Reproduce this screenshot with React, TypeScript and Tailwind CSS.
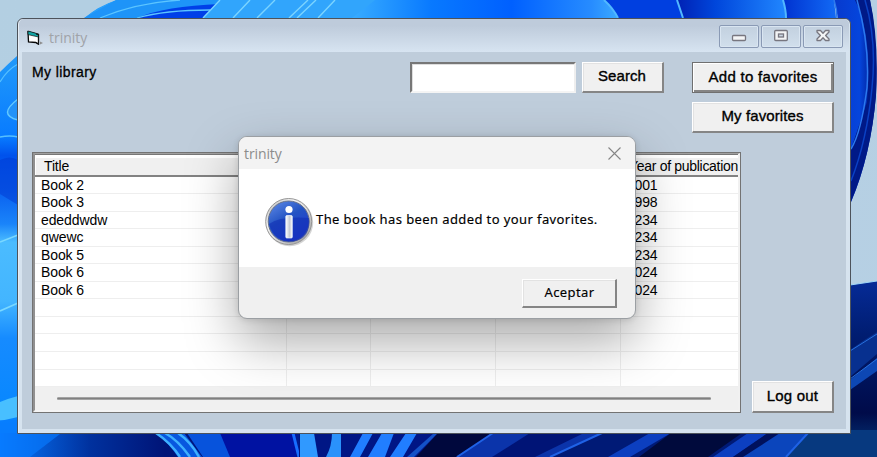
import type { ReactNode } from "react";

const titles = ["Book 2", "Book 3", "ededdwdw", "qwewc", "Book 5", "Book 6", "Book 6", "", "", "", "", ""];
const years = ["2001", "1998", "1234", "1234", "1234", "2024", "2024", "", "", "", "", ""];

function Wallpaper() {
  return (
    <svg className="absolute inset-0" width="877" height="457" viewBox="0 0 877 457">
      <defs>
        <linearGradient id="sky" x1="0" y1="0" x2="1" y2="1">
          <stop offset="0" stopColor="#b3cfe2" />
          <stop offset="1" stopColor="#b7d0e4" />
        </linearGradient>
        <linearGradient id="left" x1="0" y1="0" x2="0" y2="1">
          <stop offset="0" stopColor="#2da2fb" />
          <stop offset="0.14" stopColor="#1f97fa" />
          <stop offset="0.3" stopColor="#087bff" />
          <stop offset="0.34" stopColor="#0052ec" />
          <stop offset="0.42" stopColor="#0a62f0" />
          <stop offset="0.49" stopColor="#1a84fa" />
          <stop offset="0.53" stopColor="#4bbcff" />
          <stop offset="0.66" stopColor="#43b5ff" />
          <stop offset="0.74" stopColor="#168bff" />
          <stop offset="0.9" stopColor="#0787ff" />
          <stop offset="1" stopColor="#0874f8" />
        </linearGradient>
        <linearGradient id="petal">
          <stop offset="0" stopColor="#38acff" />
          <stop offset="0.3" stopColor="#0879ff" />
          <stop offset="0.6" stopColor="#0060ff" />
          <stop offset="0.9" stopColor="#278cff" />
          <stop offset="1" stopColor="#3caaff" />
        </linearGradient>
        <linearGradient id="petal2">
          <stop offset="0" stopColor="#0021b4" />
          <stop offset="0.35" stopColor="#0046db" />
          <stop offset="1" stopColor="#2187ff" />
        </linearGradient>
        <linearGradient id="petal3">
          <stop offset="0" stopColor="#0032d0" />
          <stop offset="1" stopColor="#126af5" />
        </linearGradient>
        <linearGradient id="rim">
          <stop offset="0" stopColor="#0739cd" />
          <stop offset="0.6" stopColor="#0545dc" />
          <stop offset="1" stopColor="#001482" />
        </linearGradient>
        <linearGradient id="low">
          <stop offset="0" stopColor="#087bff" />
          <stop offset="0.3" stopColor="#00319e" />
          <stop offset="0.55" stopColor="#001477" />
          <stop offset="1" stopColor="#001b91" />
        </linearGradient>
        <linearGradient id="navy" x1="0" y1="0" x2="0" y2="1">
          <stop offset="0" stopColor="#062b97" />
          <stop offset="0.3" stopColor="#001d72" />
          <stop offset="0.75" stopColor="#000b49" />
          <stop offset="1" stopColor="#064084" />
        </linearGradient>
      </defs>
      <rect width="877" height="457" fill="url(#sky)" />

      <path d="M116 0Q98 6 84 18V44L17 56Q9 63 0 72V457H60V18H220V0Z" fill="url(#left)" />
      <path d="M17 0H116Q98 6 84 18L17 56Z" fill="#b3cfe2" />
      <path d="M116 0L84 18H225V0Z" fill="#1e94f8" />
      <path d="M137 18Q165 6 220 4V18Z" fill="#003fe8" />
      <path d="M100 18Q135 3 180 0M137 18Q165 10 210 10" fill="none" stroke="#5cc5ff" strokeWidth="1.3" />
      <path d="M18 99Q-3 115 18 120" fill="#2292f8" stroke="#62c8ff" strokeWidth="1.5" />
      <path d="M0 82Q7 70 18 64M0 137Q10 135 18 137" fill="none" stroke="#55bfff" strokeWidth="1.3" />
      <path d="M0 160Q10 155 18 160V205L0 194Z" fill="#0036cf" opacity="0.45" />
      <path d="M0 242L18 235M0 311L18 303" stroke="#7ad8ff" strokeWidth="1.6" />
      <path d="M0 402Q10 398 18 396V417L0 421Z" fill="#48bfff" />

      <path d="M220 0H400V18H203Z" fill="#31a5fc" />
      <path d="M220 0L203 18M250 0L233 18M275 0L257 18M308 0L289 18M316 0L297 18M335 0L318 18" stroke="#7bd4ff" strokeWidth="1.4" />
      <path d="M375 0H604Q612 7 618 18H352Z" fill="url(#petal)" />
      <path d="M604 0H680L683 18H618Q612 7 604 0Z" fill="#003fe0" />
      <path d="M677 0H783L786 18H683Z" fill="url(#petal2)" />
      <path d="M783 0H834L836 18H786Z" fill="url(#petal3)" />
      <path d="M604 0Q613 8 618 18M677 0L683 18M783 0Q786 10 786 18" fill="none" stroke="#51b8ff" strokeWidth="2" />

      <path d="M834 0H870Q878 40 876 95Q871 155 851 202H838V18Z" fill="url(#rim)" />
      <path d="M855 0Q873 36 867 102L851 149V202Q871 155 876 95Q879 40 870 0Z" fill="#001987" />
      <path d="M834 0Q837 9 837 18M857 0Q870 45 867 88Q861 133 851 149" fill="none" stroke="#2b79ef" strokeWidth="1.5" />
      <path d="M865 0Q877 40 872 88Q867 140 851 181" fill="none" stroke="#0a41c4" strokeWidth="1.5" />

      <path d="M850 285L877 281V457H840Z" fill="url(#navy)" />
      <path d="M850 285L877 281" stroke="#9fd6f8" strokeWidth="1" />
      <path d="M850 350Q864 340 877 332V354L850 377Z" fill="#07308f" />
      <path d="M850 380L877 358V371L850 390Z" fill="#0d47b4" />
      <path d="M850 351L877 334M850 379L877 359" stroke="#2870dc" />

      <rect y="433" width="300" height="24" fill="url(#low)" />
      <path d="M0 420H18V434H60L30 457H0Z" fill="#087bff" opacity="0.65" />
      <path d="M155 433Q168 442 178 457H202L184 433Z" fill="#0857df" />
      <path d="M156 433Q171 443 180 457M165 433Q178 440 190 457M178 433Q191 442 199 457" fill="none" stroke="#3eb0ff" strokeWidth="2.5" />
      <path d="M187 433H260V457H203Z" fill="#0753dc" />
      <path d="M220 433H296V457H230Z" fill="#0012a2" />
      <path d="M293 433L299 457" stroke="#176dff" strokeWidth="3" />
      <rect x="299" y="433" width="578" height="24" fill="#001685" />
      <path d="M300 433H314L318 457H300Z" fill="#3099ff" />
      <path d="M332 433H341V457H326Q332 446 332 433Z" fill="#2a92fb" />
      <path d="M363 433H373L360 457H350ZM382 433H394L385 457H368ZM406 433H417L403 457H390Z" fill="#217eff" />
      <path d="M434 433H438L414 457H407Z" fill="#1351c7" />
      <path d="M438 433H494L457 457H416Z" fill="#00083d" />
      <path d="M494 433H620L552 457H456Z" fill="#0b34aa" />
      <path d="M530 433H584L535 457H492Z" fill="#001476" />
      <path d="M602 433H780V457H550Z" fill="#001a76" />
      <path d="M650 433H671L630 457H608ZM748 433H768L733 457H713Z" fill="#0c3fc0" />
      <path d="M671 433H742L708 457H639Z" fill="#000a3c" />
      <path d="M768 433H808L778 457H733Z" fill="#00115c" />
      <path d="M780 433H810L786 457H743Z" fill="#0b45bc" />
      <path d="M808 433L850 430H877V457H786Z" fill="#07397f" />
      <path d="M493 433L457 457M602 433L550 457M808 433L786 457" stroke="#1f62e6" strokeWidth="2" />
    </svg>
  );
}

function PushButton({ children, className = "", active = false }: { children: ReactNode; className?: string; active?: boolean }) {
  return (
    <button
      className={`flex items-center justify-center bg-[#f0f0f0] whitespace-nowrap text-black ${
        active
          ? "border border-[#707070] shadow-[inset_1px_1px_0_#fff,inset_-2px_-2px_0_#858585]"
          : "border-t border-l border-r-2 border-b-2 border-t-white border-l-white border-r-[#858585] border-b-[#858585] shadow-[inset_1px_1px_0_#e2e2e2]"
      } ${className}`}
    >
      {children}
    </button>
  );
}

function CaptionButton({ children }: { children: ReactNode }) {
  return (
    <button className="flex h-[23px] w-[40px] items-center justify-center rounded-[2px] border border-[#8a9ab5] bg-gradient-to-b from-[#c2d0df] to-[#d1dfec] pr-px pb-px shadow-[inset_0_0_0_1px_#d9e5f1]">
      <svg width="16" height="16" viewBox="0 0 16 16" fill="none">{children}</svg>
    </button>
  );
}

function ListView() {
  return (
    <div className="h-[261px] w-[709px] border border-[#737373] bg-[#f0f0f0]">
      <div className="h-full border-t border-l-2 border-r-2 border-b-2 border-t-[#a0a0a0] border-l-[#909090] border-r-[#f1f1f1] border-b-[#f4f4f4]">
        <div className="flex h-[22.5px] overflow-hidden border-t border-b-2 border-t-[#777] border-b-[#828282] bg-[#f0f0f0] pt-[2px] text-[14px] leading-[18px] shadow-[inset_1px_3px_0_#fff]">
          <div className="w-[585px] pl-[9px] tracking-[-0.15px]">Title</div>
          <div className="whitespace-nowrap pl-[9px] tracking-[-0.3px]">Year of publication</div>
        </div>
        <div className="bg-white text-[14px] tracking-[-0.1px]">
          {titles.map((title, i) => (
            <div key={i} className="grid h-[17.55px] grid-cols-[252px_84px_125px_125px_1fr] border-b border-[#eeeeee] leading-[17px]">
              <div className="border-r border-[#eeeeee] pl-[6px]">{title}</div>
              <div className="border-r border-[#eeeeee]" />
              <div className="border-r border-[#eeeeee]" />
              <div className="border-r border-[#eeeeee]" />
              <div className="pl-[6px] tracking-[-0.2px]">{years[i]}</div>
            </div>
          ))}
        </div>
        <div className="mt-px pl-[22px] pr-[27px] pt-[9px]">
          <div className="h-[3px] rounded-sm border-y border-[#a3a3a3] bg-[#808080]" />
        </div>
      </div>
    </div>
  );
}

function InfoIcon() {
  return (
    <svg width="50" height="50" viewBox="0 0 50 50" className="shrink-0">
      <defs>
        <linearGradient id="ring" x1="0" y1="0" x2="1" y2="1">
          <stop offset="0" stopColor="#a5a5a5" />
          <stop offset="0.3" stopColor="#f5f5f5" />
          <stop offset="0.65" stopColor="#d0d0d0" />
          <stop offset="1" stopColor="#8d8d8d" />
        </linearGradient>
        <linearGradient id="ball" x1="0" y1="0" x2="0.6" y2="1">
          <stop offset="0" stopColor="#638ee9" />
          <stop offset="0.5" stopColor="#2353c3" />
          <stop offset="1" stopColor="#2139d2" />
        </linearGradient>
        <linearGradient id="stem">
          <stop offset="0" stopColor="#fff" />
          <stop offset="0.6" stopColor="#c5cad4" />
          <stop offset="1" stopColor="#fff" />
        </linearGradient>
      </defs>
      <circle cx="25.7" cy="25.7" r="23.5" fill="#aaa" opacity="0.5" />
      <circle cx="24.7" cy="24.5" r="23" fill="url(#ring)" stroke="#969696" />
      <circle cx="24.7" cy="24.5" r="20.5" fill="url(#ball)" stroke="#66718a" />
      <path d="M5 27Q16 19 45 21Q47 42 29 44.5Q11 45.5 5 27Z" fill="#102fb4" opacity="0.6" />
      <circle cx="25" cy="12.5" r="3.6" fill="white" />
      <rect x="21.8" y="18.5" width="6.5" height="22.5" rx="1" fill="url(#stem)" stroke="#eef3ff" strokeWidth="0.7" />
    </svg>
  );
}

function MessageBox() {
  return (
    <section className="absolute left-[238px] top-[136px] flex h-[183px] w-[398px] flex-col overflow-hidden rounded-[9px] border border-[#9b9fa3] bg-[#f0f0f0] font-['Open_Sans','Noto_Sans',sans-serif] shadow-[0_22px_52px_rgba(0,0,0,0.34),0_1px_6px_rgba(0,0,0,0.12)]">
      <header className="flex h-[32px] items-center justify-between bg-[#f3f3f3] pl-[5px] pr-[14px] text-[14px] tracking-[-0.1px] text-[#8c8c8c]">
        <span>trinity</span>
        <svg width="13" height="13" viewBox="0 0 13 13" stroke="#858585" strokeWidth="1.1">
          <path d="M.5 .5L12.5 12.5M12.5 .5L.5 12.5" />
        </svg>
      </header>
      <div className="flex h-[98px] items-center bg-white pl-[25px] pt-[8px] text-[13px] text-black">
        <InfoIcon />
        <p className="ml-[2px] -mt-[5px] whitespace-nowrap font-['Noto_Sans',sans-serif] tracking-[0.4px] [-webkit-text-stroke:0.15px_black]">The book has been added to your favorites.</p>
      </div>
      <footer className="flex flex-1 items-start justify-end pr-[18px] pt-[12px]">
        <PushButton className="h-[29px] w-[95px] pl-px font-['Noto_Sans',sans-serif] text-[13px] tracking-[0.4px] [-webkit-text-stroke:0.15px_black]">Aceptar</PushButton>
      </footer>
    </section>
  );
}

export default function App() {
  return (
    <main className="relative h-[457px] w-[877px] overflow-hidden font-['Liberation_Sans',Arial,sans-serif] text-black">
      <Wallpaper />
      <section className="absolute left-[17px] top-[18px] flex h-[416px] w-[834px] flex-col rounded-t-[6px] border border-[#4d535b] bg-[#d6e3ef] px-[4px] pb-[4px] shadow-[inset_1px_1px_0_#e5edf5]">
        <header className="-mx-[3px] flex h-[33px] shrink-0 items-center justify-between rounded-t-[5px] bg-gradient-to-b from-[#becbdb] from-20% to-[#d7e4f1] pl-[7px] pr-[6px]">
          <div className="flex items-center pt-[4px] font-['Open_Sans',sans-serif] text-[14px] text-[#a0a3a8]">
            <svg width="18" height="16" viewBox="0 0 18 16" className="mr-[5px]">
              <path d="M2 1.5L12.5 4.5V14L9.8 12.5L2.5 12Z" fill="white" stroke="#050505" strokeWidth="1.3" />
              <path d="M2 1L12.5 4V7L2 4.6Z" fill="#12a5a5" stroke="#101010" strokeWidth="0.7" />
              <path d="M10 4L12.5 5V14.5L9.5 12.5" fill="none" stroke="#111" strokeWidth="1" />
              <path d="M14 11.5L17 13L14 14.5Z" fill="#8d8d8d" />
            </svg>
            <span>trinity</span>
          </div>
          <div className="flex gap-[2px] pt-[2px]">
            <CaptionButton>
              <rect x="1.5" y="7.5" width="13" height="5" rx="1" fill="#f3f4f5" stroke="#77767f" strokeWidth="1.3" />
            </CaptionButton>
            <CaptionButton>
              <rect x="1.7" y="2.5" width="12.6" height="10" rx="1" fill="#f3f4f5" stroke="#77767f" strokeWidth="1.3" />
              <rect x="5.5" y="6" width="5" height="3" fill="#cbd6e2" stroke="#77767f" strokeWidth="1.3" />
            </CaptionButton>
            <CaptionButton>
              <path d="M2 2.5H5.5L8 5.2L10.5 2.5H14V4L10.6 7.5L14 11V12.5H10.5L8 9.8L5.5 12.5H2V11L5.4 7.5L2 4Z" fill="#f3f4f5" stroke="#77767f" strokeWidth="1.3" strokeLinejoin="round" />
            </CaptionButton>
          </div>
        </header>
        <div className="flex min-h-0 flex-1 flex-col bg-[#bfcddb] pl-[10px] pr-[12px] pt-[10px] font-medium">
          <div className="flex h-[90px] items-start text-[15px]">
            <div className="w-[378px] pt-px text-[14px] leading-[19px] tracking-[0.4px] [-webkit-text-stroke:0.3px_black]">My library</div>
            <input className="h-[31px] w-[166px] border-2 border-t-[#777] border-l-[#777] border-r-[#eeeeee] border-b-[#f4f4f4] bg-white shadow-[inset_1px_1px_0_#dedede] outline-none" aria-label="Search library" />
            <PushButton className="ml-[6px] h-[31px] w-[82px] pr-px pb-px tracking-[0.1px] [-webkit-text-stroke:0.35px_black]">Search</PushButton>
            <div className="ml-[28px] flex w-[142px] flex-col gap-[9px] [-webkit-text-stroke:0.35px_black]">
              <PushButton active className="h-[31px] pb-px tracking-[0.3px]">Add to favorites</PushButton>
              <PushButton className="h-[31px] pb-px tracking-[0.1px]">My favorites</PushButton>
            </div>
          </div>
          <div className="flex items-end justify-between">
            <ListView />
            <PushButton className="h-[32px] w-[82px] text-[15px] tracking-[0.2px] [-webkit-text-stroke:0.35px_black]">Log out</PushButton>
          </div>
        </div>
      </section>
      <MessageBox />
    </main>
  );
}
